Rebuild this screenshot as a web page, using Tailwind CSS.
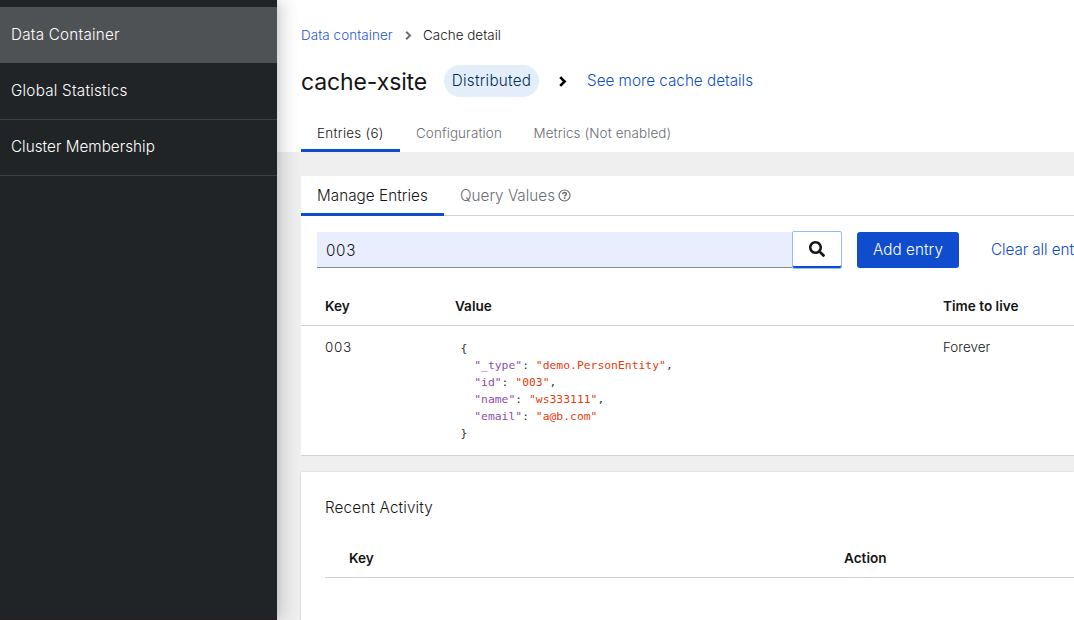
<!DOCTYPE html>
<html lang="en">
<head>
<meta charset="utf-8">
<title>cache-xsite</title>
<script src="https://cdn.jsdelivr.net/npm/@tailwindcss/browser@4"></script>
</head>
<body class="h-[620px] w-[1074px] overflow-hidden bg-[#efefef] font-['Inter',sans-serif] text-[15.25px] font-[350] text-[#151515]">
<div class="flex h-full">
  <nav class="relative z-10 flex w-[277px] shrink-0 flex-col border-b border-[#2c1a1e] bg-[#212427] pt-[7px] leading-6 text-white shadow-[6px_0_16px_rgba(3,3,3,0.16),0_0_6px_rgba(3,3,3,0.08)]">
    <a class="flex h-14 items-center bg-[#4f5255] pl-[11px] font-light tracking-[0.22px]">Data Container</a>
    <a class="flex h-[57px] items-center border-b border-[#3c3f42] pl-[11px] font-light tracking-[0.23px]">Global Statistics</a>
    <a class="flex h-14 items-center border-b border-[#3c3f42] pb-px pl-[11px] font-light tracking-[0.02px]">Cluster Membership</a>
  </nav>
  <main class="flex w-[797px] shrink-0 flex-col">
    <header class="flex h-[152px] shrink-0 flex-col bg-white pl-6">
      <div class="mt-[25px] flex h-[21px] items-center text-[13.4px] leading-[21px]">
        <a class="w-[92px] whitespace-nowrap tracking-[0.08px] text-[#1f59d4]">Data container</a>
        <svg class="ml-3 mr-[11px] h-[9px] w-[7px]" viewBox="0 0 7 9" fill="none" stroke="#6a6e73" stroke-width="2"><path d="M1.2 .8 5 4.5 1.2 8.2"/></svg>
        <span class="whitespace-nowrap tracking-[0.04px]">Cache detail</span>
      </div>
      <div class="mt-[19px] flex h-8 items-center">
        <h1 class="w-[143px] whitespace-nowrap pt-px text-[23px] font-normal leading-8 tracking-[-0.13px]">cache-xsite</h1>
        <span class="flex h-8 w-[95px] items-center justify-center rounded-full bg-[#e4eefa] tracking-[0.23px] text-[#002f5d]">Distributed</span>
        <svg class="ml-5 mr-5 h-[11px] w-2" viewBox="0 0 8 11" fill="none" stroke="#000" stroke-width="2.6"><path d="M1.2 1.1 5.6 5.5 1.2 9.9"/></svg>
        <a class="whitespace-nowrap text-[#0f4dce]">See more cache details</a>
      </div>
      <div class="mt-[18px] flex h-[37px] text-[13.4px] leading-[37px] text-[#6a6e73]">
        <span class="w-[99px] border-b-3 border-[#0f4dce] pl-4 tracking-[0.28px] text-[#151515]">Entries (6)</span>
        <span class="w-[118px] pl-4 tracking-[0.12px]">Configuration</span>
        <span class="pl-[15.5px] tracking-[0.12px]">Metrics (Not enabled)</span>
      </div>
    </header>
    <section class="ml-6 mt-6 flex h-[280px] shrink-0 flex-col border-b border-[#d2d2d2] bg-white">
      <div class="flex h-10 shrink-0 border-b border-[#d2d2d2] leading-[39px] text-[#6a6e73]">
        <span class="h-10 w-[143px] border-b-3 border-[#0f4dce] pl-4 tracking-[0.04px] text-[#151515]">Manage Entries</span>
        <span class="ml-4 w-[98px] whitespace-nowrap">Query Values</span>
        <svg class="mt-[12.5px] h-[13px] w-[13px]" viewBox="0 0 13 13" fill="none" stroke="#6a6e73"><circle cx="6.5" cy="6.5" r="5.5" stroke-width="1.2"/><path d="M4.7 5.1C4.8 3.9 5.6 3.5 6.5 3.5c1 0 1.9.6 1.9 1.5 0 1.1-1.7 1.2-1.7 2.4" stroke-width="1.5"/><path d="M5.8 9.1h1.7" stroke-width="1.5"/></svg>
      </div>
      <div class="mt-[15px] flex h-[38px] shrink-0 pl-4">
        <div class="mt-px h-9 w-[475px] shrink-0 border-b border-[#8a8d90] bg-[#e8eefd] pl-[9px] pt-px leading-[36px] tracking-[0.7px]">003</div>
        <div class="flex h-[38px] w-[50px] shrink-0 items-center justify-center rounded-[2px] border border-[#92bff0] bg-white shadow-[inset_0_-2px_#0f4dce]">
          <svg class="-mt-0.5 h-4 w-4" viewBox="0 0 512 512" fill="#151515"><path d="M505 442.700 405.300 343c-4.500-4.500-10.600-7-17-7H372c27.600-35.300 44-79.700 44-128C416 93.100 322.900 0 208 0S0 93.100 0 208s93.100 208 208 208c48.300 0 92.700-16.400 128-44v16.300c0 6.400 2.500 12.500 7 17l99.700 99.700c9.400 9.400 24.600 9.400 33.900 0l28.300-28.300c9.400-9.400 9.400-24.600.1-34zM208 336c-70.700 0-128-57.200-128-128 0-70.700 57.200-128 128-128 70.700 0 128 57.200 128 128 0 70.700-57.200 128-128 128z"/></svg>
        </div>
        <button class="ml-[15px] mt-px h-9 w-[102px] shrink-0 rounded-[3px] bg-[#0f4dce] font-light tracking-[0.05px] text-white">Add entry</button>
        <a class="mt-px shrink-0 whitespace-nowrap pl-8 leading-9 tracking-[-0.08px] text-[#0f4dce]">Clear all entries</a>
      </div>
      <div class="mt-[19px] flex h-[38px] shrink-0 border-b border-[#d2d2d2] pl-6 text-[13.6px] font-semibold leading-[37px]">
        <span class="w-[130px]">Key</span><span class="w-[488px]">Value</span><span>Time to live</span>
      </div>
      <div class="flex pl-6 pt-[11px] text-[13.4px] leading-[21px]">
        <span class="w-[130px] tracking-[0.7px]">003</span>
        <div class="w-[488px] whitespace-pre pl-[5.5px] pt-[3px] font-['DejaVu_Sans_Mono',monospace] text-[11.35px] font-normal leading-[17px] tracking-[0.015px] text-[#333]"><div>{</div><div>  <span class="text-[#8b4fa8]">"_type"</span>: <span class="text-[#ea3c0c]">"demo.PersonEntity"</span>,</div><div>  <span class="text-[#8b4fa8]">"id"</span>: <span class="text-[#ea3c0c]">"003"</span>,</div><div>  <span class="text-[#8b4fa8]">"name"</span>: <span class="text-[#ea3c0c]">"ws333111"</span>,</div><div>  <span class="text-[#8b4fa8]">"email"</span>: <span class="text-[#ea3c0c]">"a@b.com"</span></div><div>}</div></div>
        <span class="tracking-[0.02px]">Forever</span>
      </div>
    </section>
    <section class="ml-6 mt-4 flex h-[160px] shrink-0 flex-col bg-white pl-6 shadow-[0_1px_2px_rgba(3,3,3,0.12),0_0_2px_rgba(3,3,3,0.1)]">
      <h2 class="mt-6 font-[350] leading-6 tracking-[0.15px]">Recent Activity</h2>
      <div class="mt-5 flex h-[38px] shrink-0 border-b border-[#d2d2d2] pl-6 text-[13.6px] font-semibold leading-[37px]">
        <span class="w-[495px]">Key</span><span>Action</span>
      </div>
    </section>
  </main>
</div>
</body>
</html>
